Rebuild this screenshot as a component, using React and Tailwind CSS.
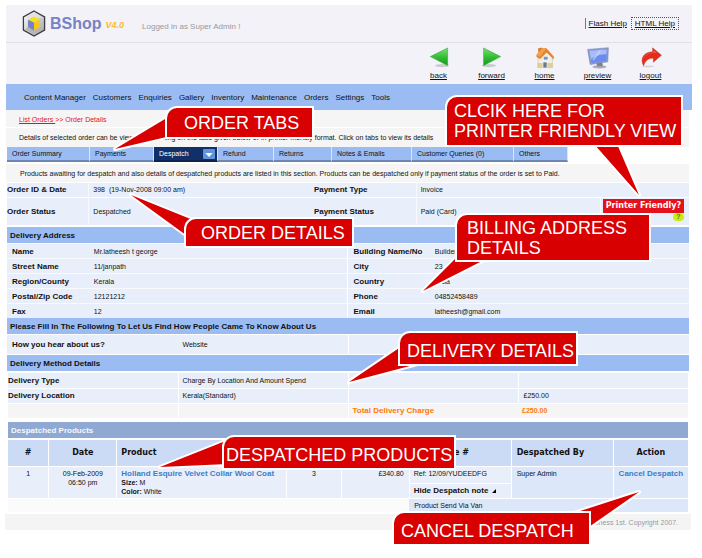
import React from 'react';

const NAV = ['Content Manager', 'Customers', 'Enquiries', 'Gallery', 'Inventory', 'Maintenance', 'Orders', 'Settings', 'Tools'];

const ADDRESS = [
  ['Name', 'Mr.latheesh t george', 'Building Name/No', 'Builders'],
  ['Street Name', '11/janpath', 'City', '23'],
  ['Region/County', 'Kerala', 'Country', 'India'],
  ['Postal/Zip Code', '12121212', 'Phone', '04852458489'],
  ['Fax', '12', 'Email', 'latheesh@gmail.com'],
];

function Logo() {
  return (
    <svg viewBox="0 0 24 27" className="h-[27px] w-6" aria-hidden="true">
      <defs>
        <linearGradient id="shell" x1="0" y1="0" x2="1" y2="1">
          <stop offset="0" stopColor="#ffffff" />
          <stop offset="1" stopColor="#a2a2a2" />
        </linearGradient>
      </defs>
      <path d="M12 1 L22.6 7 V20 L12 26 L1.4 20 V7 Z" fill="url(#shell)" stroke="#3c3c40" strokeWidth="1.3" />
      <path d="M12 2.6 L20.8 7.6 L12 8 L3.2 7.6 Z" fill="#e2e2e2" />
      <path d="M12 24.4 L3 19.2 L6 17 L12 20 L18 17 L21 19.2 Z" fill="#b5b5b5" />
      <path d="M12 6.6 L18 9.4 L12 12.6 L6 9.8 Z" fill="#f3e21c" />
      <path d="M12 12.6 L18 9.4 V17 L12 20.4 Z" fill="#f5c81b" />
      <path d="M6 9.8 L12 12.6 V20.4 L6 17 Z" fill="#7780c9" />
    </svg>
  );
}

function BackIcon() {
  return (
    <svg viewBox="0 0 22 22" className="size-[22px]" aria-hidden="true">
      <defs>
        <linearGradient id="gb" x1="0" y1="0" x2="0" y2="1">
          <stop offset="0" stopColor="#7fdd7a" />
          <stop offset="0.5" stopColor="#35bf35" />
          <stop offset="1" stopColor="#12961c" />
        </linearGradient>
      </defs>
      <ellipse cx="14" cy="18.6" rx="7" ry="1.6" fill="#c9cbcc" />
      <path d="M19.6 1 V18.6 L2.4 9.6 Z" fill="url(#gb)" stroke="#2fae35" strokeWidth="0.6" />
    </svg>
  );
}

function ForwardIcon() {
  return (
    <svg viewBox="0 0 22 22" className="size-[22px]" aria-hidden="true">
      <defs>
        <linearGradient id="gf" x1="0" y1="0" x2="0" y2="1">
          <stop offset="0" stopColor="#7fdd7a" />
          <stop offset="0.5" stopColor="#35bf35" />
          <stop offset="1" stopColor="#12961c" />
        </linearGradient>
      </defs>
      <ellipse cx="8" cy="18.6" rx="7" ry="1.6" fill="#c9cbcc" />
      <path d="M2.6 1 V18.6 L19.6 9.6 Z" fill="url(#gf)" stroke="#2fae35" strokeWidth="0.6" />
    </svg>
  );
}

function HomeIcon() {
  return (
    <svg viewBox="0 0 22 22" className="size-[22px]" aria-hidden="true">
      <path d="M4 9.5 L11 3.5 L18.4 10 V20.6 H4 Z" fill="#f3efe4" stroke="#cdbf9a" strokeWidth="0.6" />
      <path d="M3.4 16 H18.8 V21 H3.4 Z" fill="#ddcf9b" />
      <path d="M4 1.4 L8 0.6 V5 L4.6 7 Z" fill="#d9782a" />
      <path d="M2.4 8 L8.4 1 L12.4 1.2 L19.8 9.6 V12.4 L12.6 5.6 L6.2 12 L2.6 10 Z" fill="#e8832c" />
      <path d="M8.4 1 L12.4 1.2 L6 9.8 L2.4 8 Z" fill="#f2a14e" />
      <path d="M9.4 9.4 H14 V13 H9.4 Z" fill="#6f97cf" stroke="#ffffff" strokeWidth="0.6" />
      <path d="M9 15 H13 V21 H9 Z" fill="#6c7890" stroke="#ffffff" strokeWidth="0.6" />
    </svg>
  );
}

function PreviewIcon() {
  return (
    <svg viewBox="1 0 22 24" preserveAspectRatio="none" className="h-[22px] w-[22px]" aria-hidden="true">
      <ellipse cx="13.4" cy="21.6" rx="7" ry="1.8" fill="#a9adba" />
      <path d="M10.4 16.6 L16 16 L17 21 H11 Z" fill="#7d828f" />
      <path d="M1.6 2.6 L22.4 0.8 L21.8 16.2 L4.2 19.2 Z" fill="#8f9cc6" stroke="#6c7aa8" strokeWidth="0.5" />
      <path d="M3.4 4 L20.8 2.6 L20.2 15 L5.6 17.4 Z" fill="#6a8bf2" />
      <path d="M3.4 4 L20.8 2.6 L20.4 8 C14 7.4 9 10 5 13.4 Z" fill="#a9bdfa" />
      <path d="M13 4 L15.4 3.8 L8 14.4 L6.4 14.4 Z" fill="#cfdafd" opacity="0.7" />
    </svg>
  );
}

function LogoutIcon() {
  return (
    <svg viewBox="0 0 22 22" className="size-[22px]" aria-hidden="true">
      <ellipse cx="8" cy="19.4" rx="6" ry="1" fill="#d8d4d8" />
      <path d="M12.6 0.8 L21.4 8.2 L13.4 15.2 V11.4 C8.6 11 5.2 13.6 3.6 18.8 C-0.6 11.4 4.4 4.8 12.6 4.8 Z" fill="#e32d1c" stroke="#c62114" strokeWidth="0.4" />
      <path d="M13.4 2.8 L17 6 C10 5.6 5.4 7.4 2.8 12.6 C4 7.8 8 5.6 13.4 5.6 Z" fill="#f0573c" />
    </svg>
  );
}

const TOOLS = [
  ['back', BackIcon],
  ['forward', ForwardIcon],
  ['home', HomeIcon],
  ['preview', PreviewIcon],
  ['logout', LogoutIcon],
];

const TABS = [
  ['Order Summary', 'w-[83px]'],
  ['Payments', 'w-16'],
  ['Despatch', 'w-16'],
  ['Refund', 'w-14'],
  ['Returns', 'w-[58px]'],
  ['Notes & Emails', 'w-20'],
  ['Customer Queries (0)', 'w-[102px]'],
  ['Others', 'w-[54px]'],
];

function SectionBar({ children }) {
  return <h2 className="flex h-4 items-center bg-[#9abcf3] px-[3px] text-[8px] font-bold">{children}</h2>;
}

function Callout({ place, children }) {
  return (
    <div className={`absolute flex items-center rounded-tl-[10px] bg-[#d80000] text-[18px] leading-5 whitespace-nowrap text-white ring-2 ring-white ${place}`}>
      <p>{children}</p>
    </div>
  );
}

function Annotations() {
  return (
    <>
      <svg className="pointer-events-none absolute top-0 left-0 h-[558px] w-[702px]" viewBox="0 0 702 558" fill="#d80000" stroke="#ffffff" strokeWidth="4" strokeLinejoin="round" paintOrder="stroke" aria-hidden="true">
        <path d="M115 149 L170 116 L175 135 Z" />
        <path d="M131 195 L198 222 L190 238 Z" />
        <path d="M594 144 L617 144 L639 195 Z" />
        <path d="M423 291 L457 257 L490 257 Z" />
        <path d="M349 382 L402 346 L425 362 Z" />
        <path d="M160 467 L228 440 L228 464 Z" />
        <path d="M639 492 L574 513 L586 529 Z" />
      </svg>
      <Callout place="left-[167px] top-[108px] h-[29px] w-[145px] pl-[17px]">ORDER TABS</Callout>
      <Callout place="left-[186px] top-[219px] h-[27px] w-[166px] pl-[15px]">ORDER DETAILS</Callout>
      <Callout place="left-[447px] top-[97px] h-12 w-[234px] pl-[7px]">CLCIK HERE FOR<br />PRINTER FRIENDLY VIEW</Callout>
      <Callout place="left-[457px] top-[215px] h-[45px] w-48 pl-[10px]">BILLING ADDRESS<br />DETAILS</Callout>
      <Callout place="left-[400px] top-[333px] h-[31px] w-44 pt-1 pl-[7px]">DELIVERY DETAILS</Callout>
      <Callout place="left-[224px] top-[437px] h-[31px] w-[230px] pt-1 pl-[2px]">DESPATCHED PRODUCTS</Callout>
      <Callout place="left-[394px] top-[513px] h-[31px] w-[195px] pt-1 pl-[7px]">CANCEL DESPATCH</Callout>
    </>
  );
}

export default function App() {
  return (
    <div className="relative min-h-screen bg-white pt-[5px] font-['Liberation_Sans',Arial,sans-serif] text-[7px] leading-[9px] text-[#111]">
      <div className="mr-[10px] ml-[6px]">
        <header className="bg-[#f2f2f8]">
          <div className="flex h-[38px] items-center border-b border-[#e0e0e6] pr-[13px] pl-4">
            <Logo />
            <h1 className="ml-1 text-[16px] leading-5 font-bold text-[#7783c5]">BShop</h1>
            <span className="ml-1 pt-1 text-[9px] font-bold text-[#ffb92e] italic">V4.0</span>
            <span className="ml-[18px] pt-[6px] text-[8px] text-[#999]">Logged in as Super Admin !</span>
            <div className="ml-auto flex items-center gap-1 text-[8px]">
              <a href="#flash" className="border-l border-[#777] py-px pl-[3px] underline">Flash Help</a>
              <a href="#html" className="border border-dotted border-[#555] px-[3px] py-px underline">HTML Help</a>
            </div>
          </div>
          <div className="flex h-[41px] justify-end pt-1 pr-[15px]">
            {TOOLS.map(([name, Icon]) => (
              <a key={name} href={`#${name}`} className="flex w-[53px] flex-col items-center text-[8px] underline">
                <Icon />
                <span className="mt-[2px]">{name}</span>
              </a>
            ))}
          </div>
        </header>

        <nav className="flex h-[26px] items-center gap-[7px] bg-[#9abcf3] pl-[18px] text-[8px]">
          {NAV.map((n) => (
            <a key={n} href="#menu">{n}</a>
          ))}
        </nav>

        <main className="mr-[3px]">
          <div className="flex h-[18px] items-center border-b border-white bg-[#f5f5f5] pt-[2px] pl-[13px] text-[#e8101c]">
            <p><a href="#orders" className="underline">List Orders </a>&gt;&gt; Order Details</p>
          </div>
          <p className="flex h-[19px] items-center bg-[#f5f5f5] pl-[13px]">
            Details of selected order can be viewed by clicking on the tabs given below or in printer friendly format. Click on tabs to view its details
          </p>

          <div role="tablist" className="ml-px flex h-[15px]">
            {TABS.map(([label, width]) => {
              const active = label === 'Despatch';
              return (
                <button
                  key={label}
                  type="button"
                  role="tab"
                  aria-selected={active}
                  className={`flex items-center justify-between border-r border-r-[#d8e5fb] border-b-2 pr-[2px] pl-[5px] ${width} ${active ? 'border-b-[#0c2350] bg-[#113069] text-white' : 'border-b-[#6c87b4] bg-[#9abcf3]'}`}
                >
                  {label}
                  {active && (
                    <svg viewBox="0 0 12 10" className="h-[10px] w-3" aria-hidden="true">
                      <rect width="12" height="10" rx="1" fill="#5f93dc" />
                      <path d="M2.4 4 H9.6 L6 8 Z" fill="#fff" />
                    </svg>
                  )}
                </button>
              );
            })}
          </div>

          <p className="mt-[2px] flex h-[18px] items-center bg-[#f5f5f5] pl-[14px]">
            Products awaiting for despatch and also details of despatched products are listed in this section. Products can be despatched only if payment status of the order is set to Paid.
          </p>

          <div className="ml-px">
            <table className="mt-px w-full table-fixed text-left">
              <colgroup>
                <col className="w-[12%]" /><col className="w-[33%]" /><col className="w-[15%]" /><col className="w-[27%]" /><col />
              </colgroup>
              <tbody className="bg-[#e8effa]">
                <tr className="h-[14px] border-b border-white">
                  <th scope="row" className="border-r border-[#f6f9fe] text-[8px]">Order ID &amp; Date</th>
                  <td className="pl-1">398&nbsp; (19-Nov-2008 09:00 am)</td>
                  <th scope="row" className="text-[8px]">Payment Type</th>
                  <td className="border-l border-[#f6f9fe] pl-1">Invoice</td>
                  <td />
                </tr>
                <tr className="h-7">
                  <th scope="row" className="border-r border-[#f6f9fe] text-[8px]">Order Status</th>
                  <td className="pl-1">Despatched</td>
                  <th scope="row" className="text-[8px]">Payment Status</th>
                  <td className="border-l border-[#f6f9fe] pl-1">Paid (Card)</td>
                  <td className="border-l border-[#f6f9fe] pr-[5px] pl-[2px] align-top">
                    <div className="relative">
                      <button type="button" className="mt-px h-[14px] w-full bg-[#e4101c] font-['DejaVu_Sans',Verdana,sans-serif] text-[8px] font-bold whitespace-nowrap text-white">Printer Friendly?</button>
                      <span className="absolute top-[15px] right-0 flex h-2 w-[11px] items-center justify-center rounded-full bg-[#c6ee10] font-bold text-[#5b7a10]">?</span>
                    </div>
                  </td>
                </tr>
              </tbody>
            </table>

            <div className="mt-[2px]"><SectionBar>Delivery Address</SectionBar></div>
            <table className="h-[75px] w-full table-fixed bg-[#e8effa] text-left">
              <colgroup>
                <col className="w-[12%]" /><col className="w-[38%]" /><col className="w-[12%]" /><col />
              </colgroup>
              <tbody>
                {ADDRESS.map(([a, b, c, d]) => (
                  <tr key={a} className="border-t border-[#f8fafe]">
                    <th scope="row" className="pl-[5px] text-[8px]">{a}</th>
                    <td className="border-r border-white pl-[5px]">{b}</td>
                    <th scope="row" className="pl-[5px] text-[8px] whitespace-nowrap">{c}</th>
                    <td className="pl-[5px]">{d}</td>
                  </tr>
                ))}
              </tbody>
            </table>

            <SectionBar>Please Fill In The Following To Let Us Find How People Came To Know About Us</SectionBar>
            <table className="my-px w-full table-fixed bg-[#e8effa] text-left">
              <tbody>
                <tr className="h-[19px]">
                  <th scope="row" className="w-1/4 pl-[5px] text-[8px]">How you hear about us?</th>
                  <td className="w-1/4 border-r border-white pl-[5px]">Website</td>
                  <td />
                </tr>
              </tbody>
            </table>

            <SectionBar>Delivery Method Details</SectionBar>
            <div className="mr-px ml-px">
              <table className="mt-[2px] w-full table-fixed text-left">
                <tbody>
                  <tr className="h-[15px] border-b border-white bg-[#e8effa]">
                    <th scope="row" className="text-[8px]">Delivery Type</th>
                    <td className="border-x border-white pl-1">Charge By Location And Amount Spend</td>
                    <td />
                    <td className="border-l border-white" />
                  </tr>
                  <tr className="h-[15px] border-b border-white bg-[#e8effa]">
                    <th scope="row" className="text-[8px]">Delivery Location</th>
                    <td className="border-x border-white pl-1">Kerala(Standard)</td>
                    <td />
                    <td className="border-l border-white pl-[5px]">£250.00</td>
                  </tr>
                  <tr className="h-[15px] bg-[#f5f5f5] font-bold text-[#ff7a0a]">
                    <td />
                    <td className="border-x border-white" />
                    <th scope="row" className="pl-1 text-[8px]">Total Delivery Charge</th>
                    <td className="pl-1">£250.00</td>
                  </tr>
                </tbody>
              </table>

              <h2 className="mt-1 flex h-4 items-center bg-[#8fa9d3] px-[3px] text-[8px] font-bold text-[#f4f8ff]">Despatched Products</h2>
              <table className="mt-[2px] w-full table-fixed">
                <colgroup>
                  <col className="w-[6%]" /><col className="w-[10%]" /><col className="w-[25%]" /><col className="w-[8%]" /><col className="w-[10%]" /><col className="w-[15%]" /><col className="w-[15%]" /><col className="w-[11%]" />
                </colgroup>
                <thead className="bg-[#cbdbf5] font-['DejaVu_Sans',Verdana,sans-serif] text-[8px]">
                  <tr className="h-[26px] border-b border-white">
                    <th scope="col">#</th>
                    <th scope="col" className="border-l border-white">Date</th>
                    <th scope="col" className="border-l border-white pl-1 text-left">Product</th>
                    <td className="border-l border-white" />
                    <td className="border-l border-white" />
                    <th scope="col" className="border-l border-white pl-1 text-left">Reference #</th>
                    <th scope="col" className="border-l border-white pl-[5px] text-left">Despatched By</th>
                    <th scope="col" className="border-l border-white">Action</th>
                  </tr>
                </thead>
                <tbody className="bg-[#e8effa] align-top">
                  <tr className="h-[17px]">
                    <td rowSpan="2" className="pt-[2px] text-center">1</td>
                    <td rowSpan="2" className="border-l border-white pt-[2px] text-center">09-Feb-2009<br />06:50 pm</td>
                    <td rowSpan="2" className="border-l border-white pt-[2px] pl-1">
                      <a href="#product" className="text-[8px] font-bold whitespace-nowrap text-[#3f7cc9]">Holland Esquire Velvet Collar Wool Coat</a>
                      <p><b>Size:</b> M</p>
                      <p><b>Color:</b> White</p>
                    </td>
                    <td rowSpan="2" className="border-l border-white pt-[2px] text-center">3</td>
                    <td rowSpan="2" className="border-l border-white pt-[2px] pr-[5px] text-right">£340.80</td>
                    <td className="border-b border-l border-white pt-[2px] pl-1 whitespace-nowrap">Ref: 12/09/YUDEEDFG</td>
                    <td rowSpan="2" className="border-l border-white bg-[#dce7f9] pt-[2px] pl-[5px]">Super Admin</td>
                    <td rowSpan="2" className="border-l border-white bg-[#dce7f9] pt-[2px] text-center">
                      <a href="#cancel" className="text-[8px] font-bold whitespace-nowrap text-[#3f7cc9]">Cancel Despatch</a>
                    </td>
                  </tr>
                  <tr className="h-[15px]">
                    <td className="border-l border-white pl-1 align-middle">
                      <button type="button" className="flex items-center gap-1 text-[8px] font-bold">
                        Hide Despatch note
                        <svg viewBox="0 0 4 4" className="size-1" aria-hidden="true"><path d="M4 0 V4 H0 Z" /></svg>
                      </button>
                    </td>
                  </tr>
                  <tr className="h-[14px] border-t border-white">
                    <td colSpan="5" className="bg-[#fbfbfb]" />
                    <td colSpan="3" className="bg-[#dce7f9] pl-[5px] align-middle">Product Send Via Van</td>
                  </tr>
                </tbody>
              </table>
            </div>
          </div>
        </main>
        <footer className="mt-[2px] mr-px -ml-px flex h-4 items-center justify-end bg-[#f5f4f5] pr-[13px] text-[#999]">
          Powered by Business 1st. Copyright 2007.
        </footer>
      </div>
      <Annotations />
    </div>
  );
}
